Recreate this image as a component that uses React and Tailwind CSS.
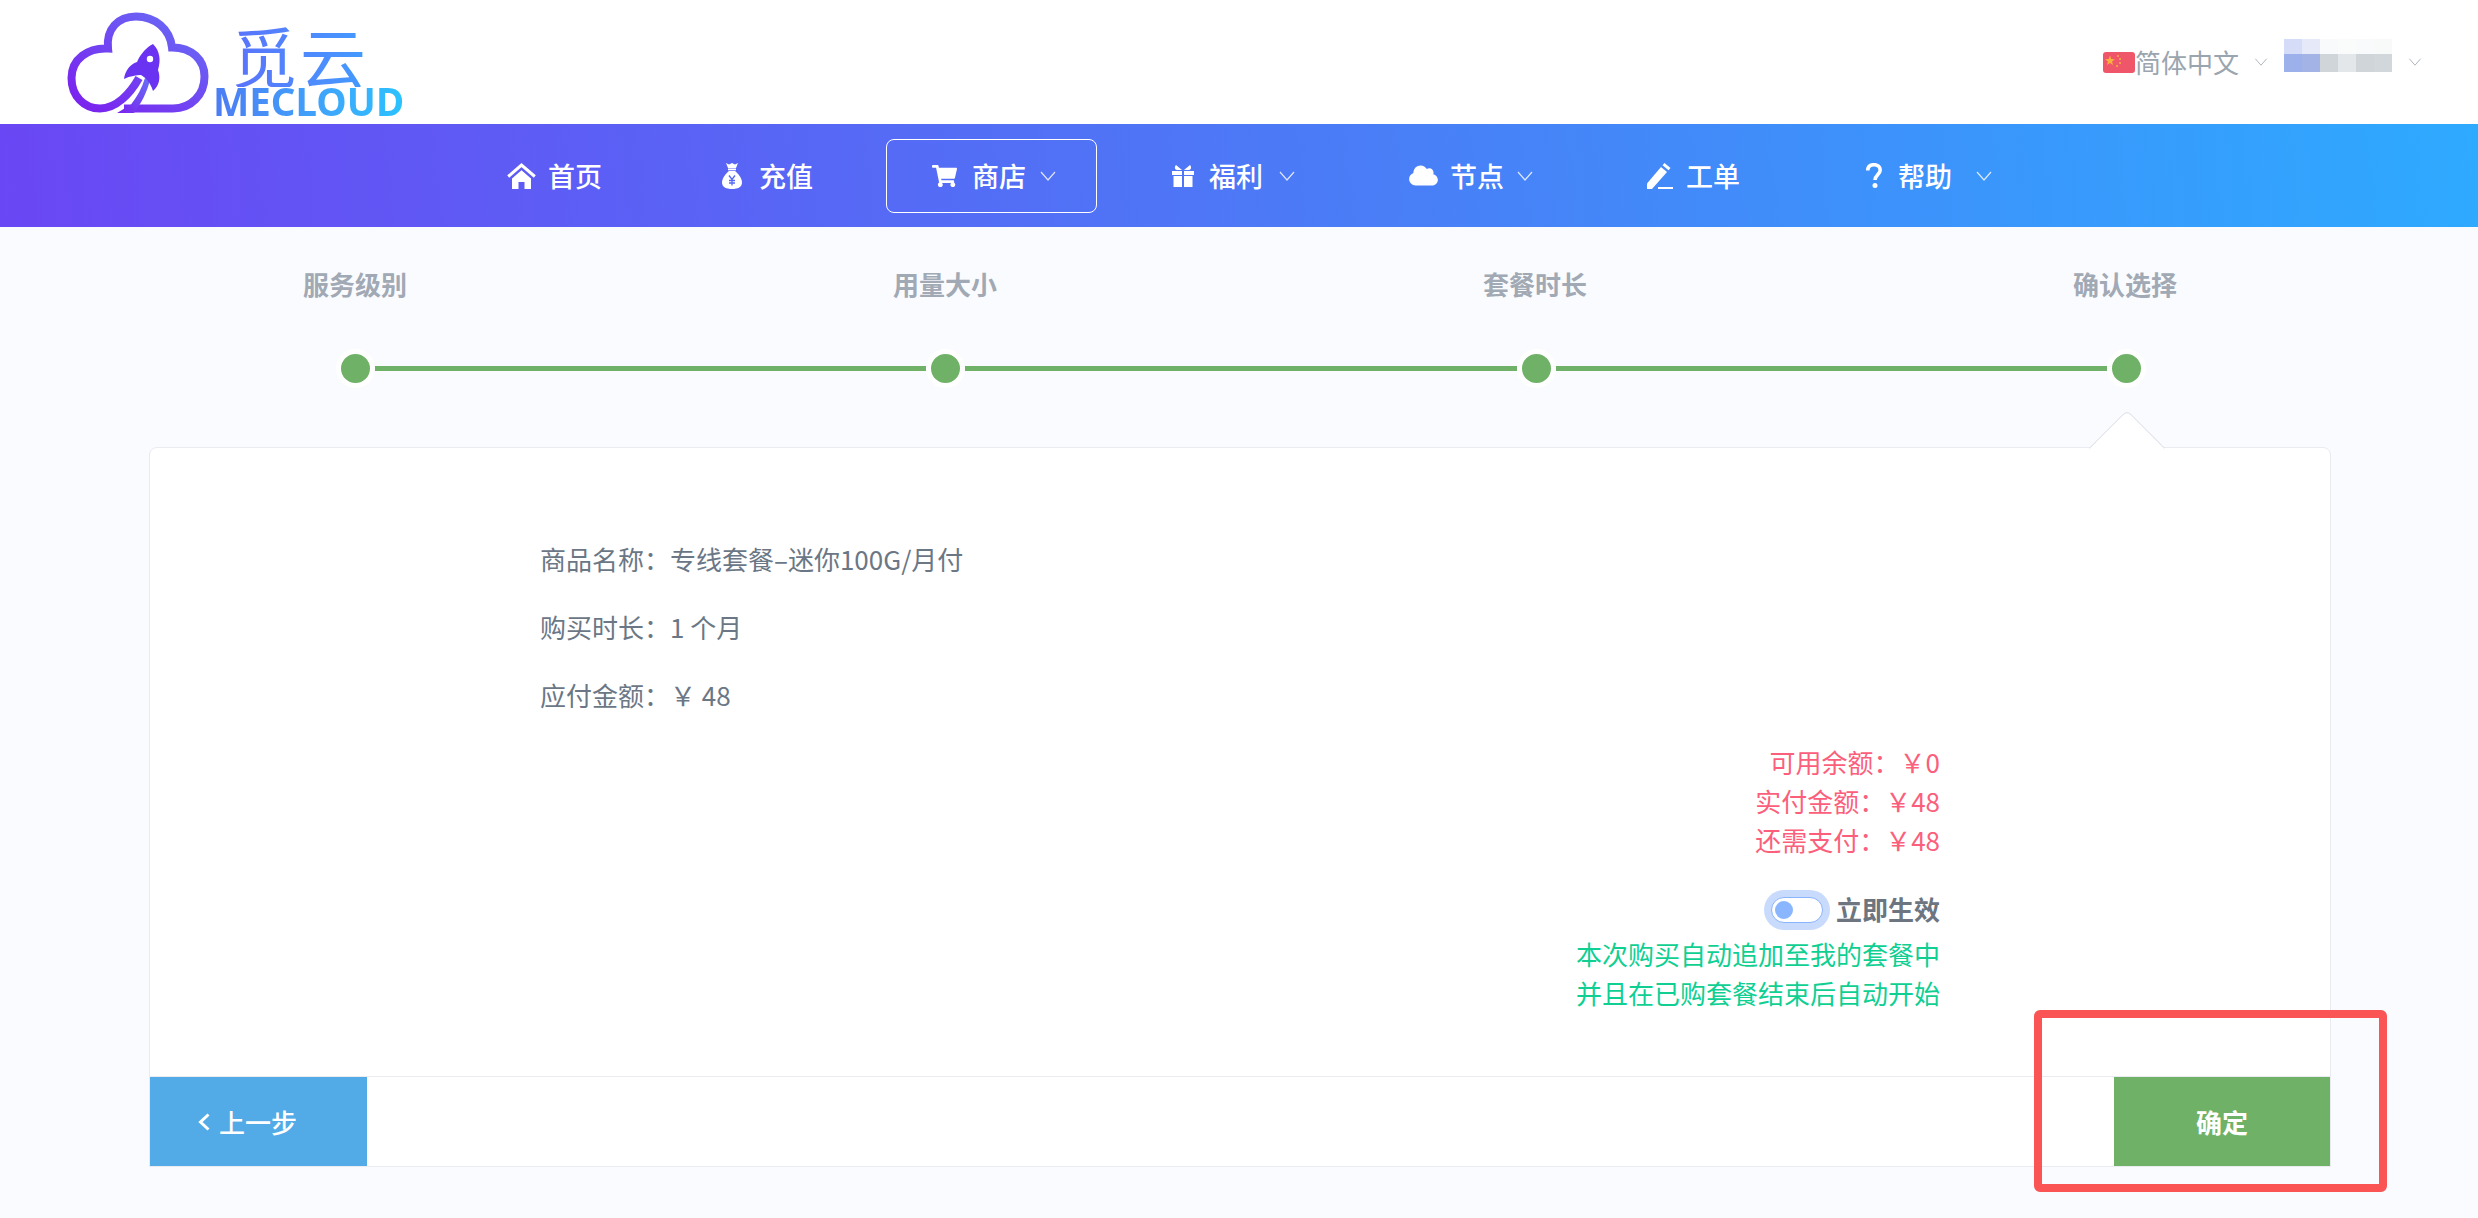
import React from "react";
import { FaShoppingCart, FaCloud } from "react-icons/fa";

const Chevron = ({ className }) => (
  <svg viewBox="0 0 16 10" fill="none" stroke="currentColor" strokeWidth="1.2" className={className}>
    <path d="M1 1l7 8 7-8" />
  </svg>
);

const HomeIcon = () => (
  <svg viewBox="0 0 29 26" fill="white" className="w-[29px] h-[26px]">
    <path d="M1.2 13.5L14.5 2l13.3 11.5" fill="none" stroke="white" strokeWidth="3" />
    <path d="M5 15.5L14.5 7.3 24 15.5V26h-6.5v-7h-6v7H5z" />
  </svg>
);

const BagIcon = () => (
  <svg viewBox="0 0 20 26" className="w-[20px] h-[26px]">
    <path d="M4 0l3 1.5L10 0l3 1.5L16 0l-2 5H6z" fill="white" />
    <rect x="6" y="5.5" width="8" height="1.8" fill="white" />
    <path d="M7 8h6c3 2.500 7 7 7 11.500 0 4.500-4 6.500-10 6.500S0 24 0 19.500C0 15 4 10.500 7 8z" fill="white" />
    <path d="M7 12.500l3 4 3-4M10 16.500v6M7 17.500h6M7 20h6" fill="none" stroke="#5568f4" strokeWidth="1.300" />
  </svg>
);

const GiftIcon = () => (
  <svg viewBox="0 0 22 22" fill="white" className="w-[22px] h-[22px]">
    <path d="M4 0l6 5H5C3 5 2 2 4 0zM18 0l-6 5h5c2 0 3-3 1-5z" />
    <rect x="0" y="6" width="10" height="4" />
    <rect x="12" y="6" width="10" height="4" />
    <rect x="1.500" y="11" width="8.500" height="11" />
    <rect x="12" y="11" width="8.500" height="11" />
  </svg>
);

const PenIcon = () => (
  <svg viewBox="0 0 26 26" fill="white" className="w-[26px] h-[26px]">
    <path d="M0 26v-5.500L14 4l6 5L5 26z" />
    <path d="M15.500 2.300L17.500 0l6 5-2 2.300z" />
    <rect x="11" y="24" width="15" height="2" />
  </svg>
);

const HelpIcon = () => (
  <svg viewBox="0 0 16 25" className="w-[16px] h-[25px]">
    <path d="M1.800 7.500C1.800 3.500 4.500 1.700 8 1.700c3.700 0 6.200 2.300 6.200 5.300 0 4.500-5.200 5-5.200 10" fill="none" stroke="white" strokeWidth="3.600" />
    <circle cx="9" cy="22.500" r="2.500" fill="white" />
  </svg>
);

const navItems = [
  { label: "首页", icon: <HomeIcon />, gap: "gap-3", pos: "ml-0" },
  { label: "充值", icon: <BagIcon />, gap: "gap-[17px]", pos: "ml-[120px]" },
  { label: "商店", icon: <FaShoppingCart className="w-[25px] h-[24px]" />, gap: "gap-[15px]", pos: "ml-[73px] w-[211px] h-[74px] pl-[45px] border border-white rounded-lg", arrow: "-ml-[1px]" },
  { label: "福利", icon: <GiftIcon />, gap: "gap-[15px]", pos: "ml-[75px]", arrow: "ml-[1px]" },
  { label: "节点", icon: <FaCloud className="w-[29px] h-[23px]" />, gap: "gap-3", pos: "ml-[114px]", arrow: "ml-[1px]" },
  { label: "工单", icon: <PenIcon />, gap: "gap-[13px]", pos: "ml-[114px]" },
  { label: "帮助", icon: <HelpIcon />, gap: "gap-4", pos: "ml-[126px]", arrow: "ml-[8px]" },
];

const steps = ["服务级别", "用量大小", "套餐时长", "确认选择"];

const blurCells = [
  "bg-[#d5dcf7]", "bg-[#e5e9f8]", "bg-[#f9fafb]", "bg-[#fafbfb]", "bg-[#f9fafb]", "bg-[#f8fafa]",
  "bg-[#9cb0ec]", "bg-[#a4b3e6]", "bg-[#d0d5da]", "bg-[#e4e7e9]", "bg-[#d0d5da]", "bg-[#d2d7dc]",
];

const Dot = () => (
  <span className="w-[39px] h-[39px] shrink-0 rounded-full bg-[#6fb267] border-[5px] border-white" />
);

const Line = () => <span className="flex-1 h-[5px] bg-[#6fb267]" />;

const Logo = () => (
  <div className="flex items-start ml-[67px] h-[124px]">
    <svg viewBox="67 12 143 102" className="w-[143px] h-[102px] mt-[12px] shrink-0">
      <defs>
        <linearGradient id="logoCloud" x1="0" y1="1" x2="1" y2="0">
          <stop offset="0" stopColor="#7b1fee" />
          <stop offset="1" stopColor="#6670f6" />
        </linearGradient>
      </defs>
      <path
        d="M124 108.500H173C191 108.500 204.500 95 204.500 76.500C204.500 60 192 47.500 172 47.500C170 29 155 16.500 136 16.500C118 16.500 106 29 108 48.500C88 47.500 71.500 59 71.500 78C71.500 96 84 108.500 100 108.500C116 108.500 130 94 139 78"
        fill="none"
        stroke="url(#logoCloud)"
        strokeWidth="8"
      />
      <path d="M117 113L131 104.500C137 97 142 88 145 78L150 80C147 92 142 102 134 113z" fill="url(#logoCloud)" />
      <path
        d="M153 44C147 47 141 53 137 62C130 64 125 71 124 79C130 76 137 75 141 75C146 78 150 82 153 91C159 86 161 78 158 70C161 60 160 51 153 44z"
        fill="#6a33f2"
      />
      <circle cx="150" cy="59" r="3.200" fill="white" />
    </svg>
    <div className="flex flex-col ml-[3px]">
      <div className="ml-[18px] mt-[21px] h-[66px] text-[66px] leading-[66px] tracking-[3px] font-normal bg-gradient-to-r from-[#5a72fb] to-[#35a5ff] bg-clip-text text-transparent">
        觅云
      </div>
      <div className="h-[30px] text-[38.500px] leading-[28px] font-bold font-['Noto_Sans','Noto_Sans_CJK_SC',sans-serif] bg-gradient-to-r from-[#4c7bf3] to-[#29c2ff] bg-clip-text text-transparent">
        MECLOUD
      </div>
    </div>
  </div>
);

export default function App() {
  return (
    <div className="relative w-full min-h-[1218px] overflow-hidden bg-[#fafbff] font-['Noto_Sans_CJK_SC','Noto_Sans',sans-serif]">
      <header className="flex items-start justify-between h-[124px] bg-white">
        <Logo />
        <div className="flex items-center mt-[42px] pr-[56px] h-[40px] text-[26px] text-[#9aa5b0]">
          <svg viewBox="0 0 32 21" className="w-[32px] h-[21px]">
            <rect width="32" height="21" rx="3" fill="#f0566a" />
            <path d="M7 3.500l1.300 3.600 3.700.1-3 2.300 1.100 3.600L7 11l-3.100 2.100L5 9.500 2 7.200l3.700-.1z" fill="#f6b23c" />
            <circle cx="15" cy="4" r="1" fill="#f6b23c" />
            <circle cx="17" cy="7" r="1" fill="#f6b23c" />
            <circle cx="17" cy="11" r="1" fill="#f6b23c" />
            <circle cx="14" cy="14" r="1" fill="#f6b23c" />
          </svg>
          <span className="leading-none">简体中文</span>
          <Chevron className="ml-[15px] w-[14px] h-[8px] text-[#aab3bc]" />
          <div className="ml-[16px] -mt-[14px] grid grid-cols-6 grid-rows-[15px_18px] w-[108px]">
            {blurCells.map((c, i) => (
              <span key={i} className={c} />
            ))}
          </div>
          <Chevron className="ml-[16px] w-[14px] h-[8px] text-[#aab3bc]" />
        </div>
      </header>

      <nav className="flex items-center h-[103px] pl-[507px] text-white text-[27px] font-medium bg-[linear-gradient(84deg,#6a47f4,#4d78f6_50%,#2eaaff)]">
        {navItems.map((item) => (
          <a key={item.label} className={`flex items-center shrink-0 ${item.gap} ${item.pos}`}>
            {item.icon}
            <span className="leading-none">{item.label}</span>
            {item.arrow && <Chevron className={`w-[16px] h-[10px] opacity-80 ${item.arrow}`} />}
          </a>
        ))}
      </nav>

      <section className="ml-[60px] mr-[58px]">
        <div className="grid grid-cols-4 pt-[38px] h-[122px]">
          {steps.map((s) => (
            <div key={s} className="text-center h-[38px] leading-[38px] text-[26px] font-bold text-[#a0a9b4]">
              {s}
            </div>
          ))}
        </div>
      </section>
      <div className="flex items-center ml-[336px] mr-[332px] h-[39px]">
        <Dot />
        <Line />
        <Dot />
        <Line />
        <Dot />
        <Line />
        <Dot />
      </div>

      <main className="relative flex flex-col h-[720px] mt-[59px] ml-[149px] w-[2182px] bg-white border border-[#e9ebf0] rounded-t-lg">
        <span className="absolute -top-[27px] left-[1950px] w-[54px] h-[54px] rotate-45 bg-white border-l border-t border-[#d9dce4] rounded-tl-md" />
        <div className="relative flex-1 pt-[77px] pl-[390px] text-[26px] text-[#6b7785]">
          <p className="h-[68px] leading-[68px]">商品名称：专线套餐–迷你100G/月付</p>
          <p className="h-[68px] leading-[68px]">购买时长：1 个月</p>
          <p className="h-[68px] leading-[68px]">应付金额：￥ 48</p>
          <div className="flex flex-col items-end mt-[13px] pr-[390px]">
            <p className="h-[39px] leading-[39px] text-[#fb5f7c]">可用余额：￥0</p>
            <p className="h-[39px] leading-[39px] text-[#fb5f7c]">实付金额：￥48</p>
            <p className="h-[39px] leading-[39px] text-[#fb5f7c]">还需支付：￥48</p>
            <div className="flex items-center mt-[31px] h-[40px]">
              <span className="flex items-center w-[66px] h-[40px] rounded-full bg-[#c9dbfd] p-[7px]">
                <span className="flex items-center w-[52px] h-[26px] rounded-full bg-white border border-[#8ab4fd] pl-[3px]">
                  <span className="w-[18px] h-[18px] rounded-full bg-[#89b6ff]" />
                </span>
              </span>
              <span className="ml-[6px] font-bold text-[#6c7580] -mt-[4px]">立即生效</span>
            </div>
            <p className="mt-[4px] h-[39px] leading-[39px] text-[#10cf92]">本次购买自动追加至我的套餐中</p>
            <p className="h-[39px] leading-[39px] text-[#10cf92]">并且在已购套餐结束后自动开始</p>
          </div>
        </div>
        <div className="relative flex justify-between h-[90px] border-t border-[#e9ebf0] text-white text-[26px]">
          <button className="flex items-center gap-[9px] w-[217px] pl-[48px] font-medium bg-[#52aae6]">
            <svg viewBox="0 0 12 18" fill="none" stroke="white" strokeWidth="3" className="w-[12px] h-[18px]">
              <path d="M10.500 1.500L2.500 9l8 7.500" />
            </svg>
            上一步
          </button>
          <button className="w-[216px] font-bold bg-[#6fb267]">确定</button>
        </div>
      </main>

      <div className="absolute left-[2034px] top-[1010px] w-[353px] h-[182px] border-[8px] border-[#fb5454] rounded-md" />
    </div>
  );
}
